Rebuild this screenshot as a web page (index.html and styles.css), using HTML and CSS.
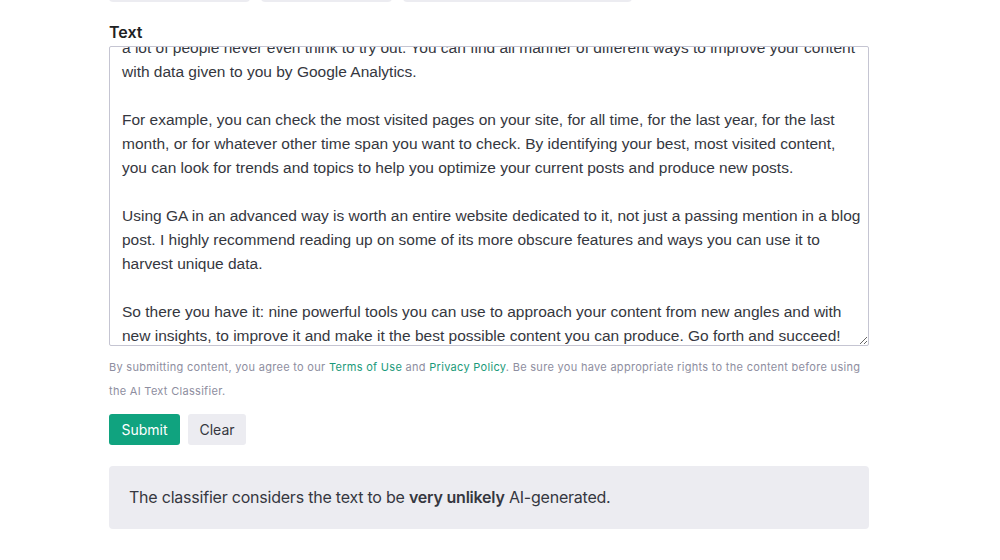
FILE: index.html
```html
<!DOCTYPE html>
<html>
<head>
<meta charset="utf-8">
<link rel="stylesheet" href="styles.css">
</head>
<body>
<main class="page">
  <div class="tabs">
    <span class="tab tab-a"></span>
    <span class="tab tab-b"></span>
    <span class="tab tab-c"></span>
  </div>
  <label class="field-label">Text</label>
  <div class="textbox">
    <div class="textbox-inner">
      <div class="line">a lot of people never even think to try out. You can find all manner of different ways to improve your content</div>
      <div class="line">with data given to you by Google Analytics.</div>
      <div class="line">&nbsp;</div>
      <div class="line">For example, you can check the most visited pages on your site, for all time, for the last year, for the last</div>
      <div class="line">month, or for whatever other time span you want to check. By identifying your best, most visited content,</div>
      <div class="line">you can look for trends and topics to help you optimize your current posts and produce new posts.</div>
      <div class="line">&nbsp;</div>
      <div class="line">Using GA in an advanced way is worth an entire website dedicated to it, not just a passing mention in a blog</div>
      <div class="line">post. I highly recommend reading up on some of its more obscure features and ways you can use it to</div>
      <div class="line">harvest unique data.</div>
      <div class="line">&nbsp;</div>
      <div class="line">So there you have it: nine powerful tools you can use to approach your content from new angles and with</div>
      <div class="line">new insights, to improve it and make it the best possible content you can produce. Go forth and succeed!</div>
    </div>
  </div>
  <p class="terms">By submitting content, you agree to our <a href="#">Terms of Use</a> and <a href="#">Privacy Policy</a>. Be sure you have appropriate rights to the content before using the AI Text Classifier.</p>
  <div class="actions">
    <button class="btn btn-primary">Submit</button>
    <button class="btn btn-secondary">Clear</button>
  </div>
  <div class="result">The classifier considers the text to be <strong>very unlikely</strong> AI-generated.</div>
</main>
</body>
</html>
```

FILE: styles.css
```css
* { box-sizing: border-box; }
html, body { margin: 0; padding: 0; background: #ffffff; }
body { font-family: Inter, "Liberation Sans", sans-serif; color: #353740; }

.page {
  width: 760px;
  margin-left: 109px;
  display: flex;
  flex-direction: column;
}

.tabs {
  display: flex;
  gap: 11px;
  height: 36px;
  margin-top: -34px;
}
.tab {
  display: block;
  height: 36px;
  background: #ececf1;
  border-radius: 4px;
}
.tab-a { width: 141px; }
.tab-b { width: 131px; }
.tab-c { width: 229px; }

.field-label {
  margin-top: 18px;
  font-family: Inter, "Liberation Sans", sans-serif;
  font-weight: 600;
  font-size: 16px;
  line-height: 24px;
  color: #202123;
  margin-bottom: 2px;
}

.textbox {
  height: 300px;
  border: 1px solid #c5c5d2;
  border-radius: 2px;
  overflow: hidden;
  resize: vertical;
  padding: 0 12px;
  font-family: "Liberation Sans", Arial, sans-serif;
  font-size: 15.5px;
  line-height: 24px;
  color: #353740;
}
.textbox-inner { margin-top: -11px; }
.line { white-space: nowrap; }

.terms {
  margin: 9px 0 0;
  padding-right: 4px;
  font-size: 11px;
  letter-spacing: 0.3px;
  line-height: 24px;
  color: #8e8ea0;
}
.terms a { color: #1a9a7a; text-decoration: none; }

.actions {
  display: flex;
  gap: 8px;
  margin-top: 11px;
}
.btn {
  height: 31px;
  border: none;
  border-radius: 3px;
  font-family: Inter, "Liberation Sans", sans-serif;
  font-size: 14px;
  padding: 0;
  cursor: pointer;
}
.btn-primary { background: #10a37f; color: #ffffff; width: 71px; }
.btn-secondary { background: #ececf1; color: #353740; width: 58px; }

.result {
  margin-top: 21px;
  height: 63px;
  background: #ececf1;
  border-radius: 4px;
  padding: 0 20px 2px;
  display: flex;
  align-items: center;
  font-size: 16px;
  letter-spacing: -0.22px;
  color: #353740;
  white-space: pre;
}
.result strong { font-weight: 600; }
```
